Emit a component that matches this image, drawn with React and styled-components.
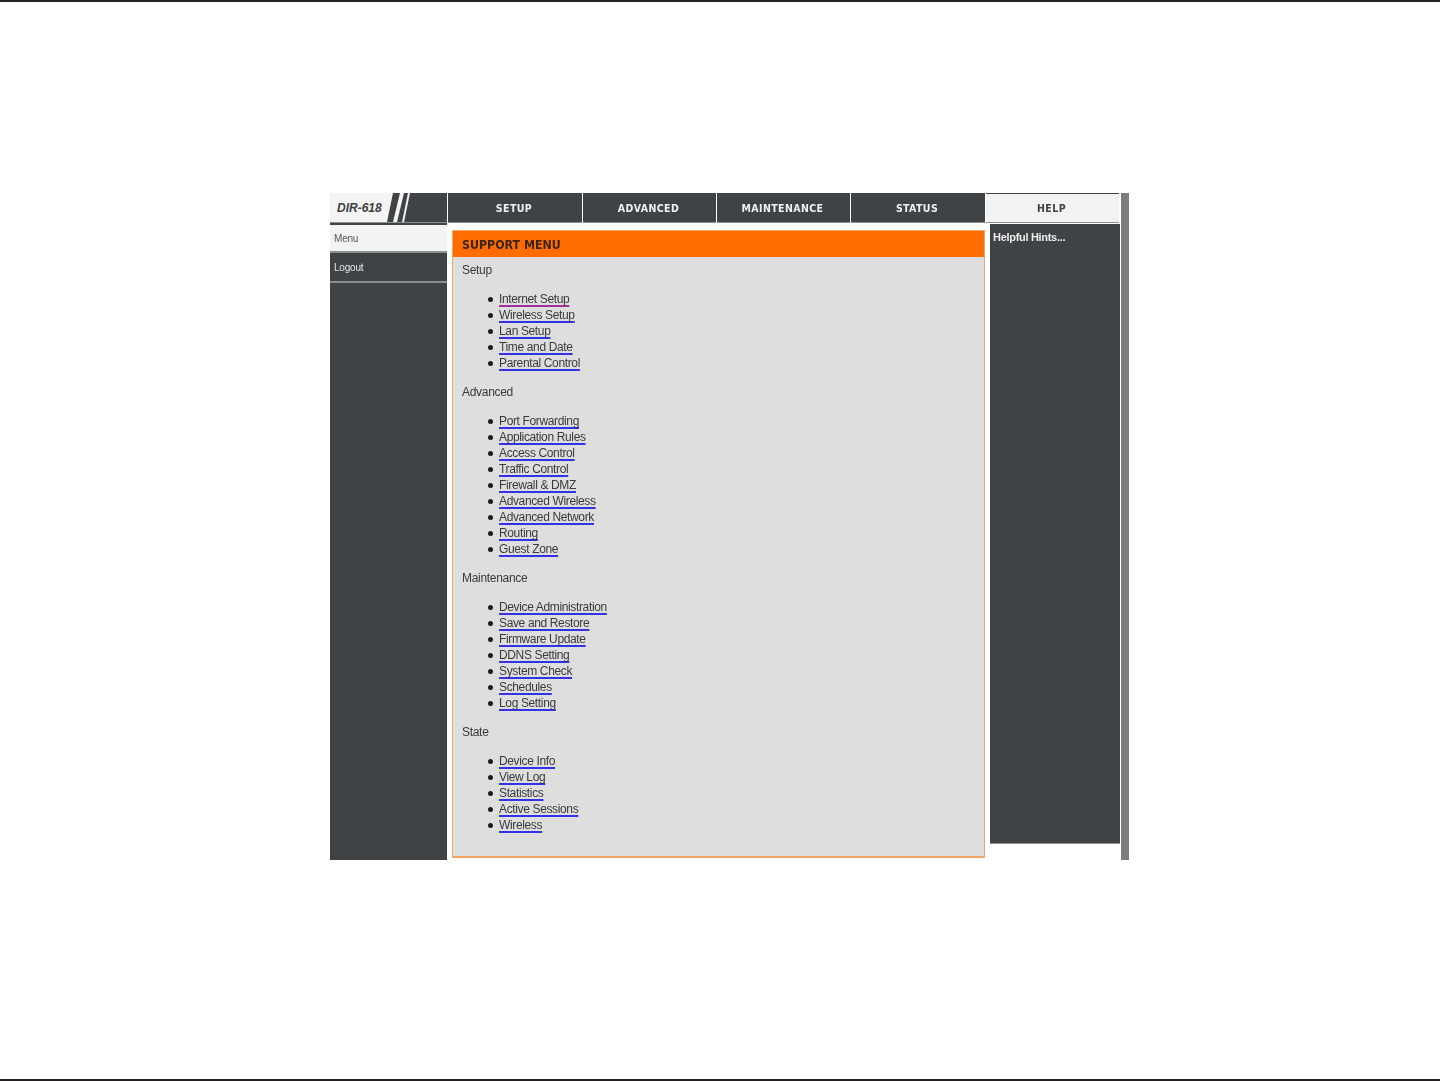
import React from "react";
import styled, { createGlobalStyle } from "styled-components";

const GlobalStyle = createGlobalStyle`
  html, body {
    margin: 0;
    padding: 0;
    background: #fff;
    font-family: "Liberation Sans", Arial, sans-serif;
  }
`;

const Page = styled.div`
  width: 1440px;
  height: 1081px;
  box-sizing: border-box;
  border-top: 2px solid #231f20;
  border-bottom: 2px solid #231f20;
  padding: 191px 311px 0 330px;
`;

const Shot = styled.div`
  width: 799px;
  height: 667px;
  display: grid;
  grid-template-columns: 791px 8px;
  filter: blur(0.6px);
`;

const RightEdge = styled.div`
  background: #7b7d7d;
`;

const Frame = styled.div`
  display: flex;
  flex-direction: column;
  min-width: 0;
`;

const TopBar = styled.div`
  height: 30px;
  display: flex;
`;

const Brand = styled.div`
  width: 117px;
  height: 30px;
  background: #404345;
  display: flex;
  border-bottom: 1px solid #8b8e8e;
  box-sizing: border-box;
  margin-right: 1px;
`;

const BrandName = styled.div`
  width: 56px;
  background: #f4f4f4;
  color: #3d3f41;
  font-size: 12px;
  font-weight: bold;
  font-style: italic;
  line-height: 30px;
  padding-left: 7px;
  box-sizing: border-box;
  white-space: nowrap;
`;

const Tab = styled.div`
  width: ${(p) => p.$width}px;
  height: 30px;
  box-sizing: border-box;
  margin-right: 1px;
  background: ${(p) => (p.$active ? "#f3f3f3" : "#404345")};
  color: ${(p) => (p.$active ? "#404345" : "#f0f0f0")};
  border-bottom: 1px solid #8b8e8e;
  border-top: ${(p) => (p.$active ? "1px solid #404345" : "none")};
  font-family: "DejaVu Sans Condensed", "DejaVu Sans", sans-serif;
  font-size: 10.5px;
  font-weight: bold;
  letter-spacing: 0.4px;
  display: flex;
  align-items: center;
  justify-content: center;
  padding: ${(p) => (p.$active ? 0 : 1)}px 2px 0 0;
`;

const Body = styled.div`
  flex: 1;
  display: flex;
  min-height: 0;
`;

const Sidebar = styled.nav`
  width: 117px;
  flex: none;
  background: #404345;
  padding-top: 2px;
  box-sizing: border-box;
`;

const SideItem = styled.div`
  height: ${(p) => (p.$active ? 28 : 30)}px;
  box-sizing: border-box;
  padding: ${(p) => (p.$active ? 8 : 9)}px 4px 0;
  background: ${(p) => (p.$active ? "#f3f3f3" : "#404345")};
  color: ${(p) => (p.$active ? "#55585a" : "#e4e4e4")};
  border-bottom: 2px solid #8b8e8e;
  font-size: 10px;
  letter-spacing: -0.2px;
`;

const Content = styled.main`
  width: 533px;
  flex: none;
  height: 628px;
  margin: 7px 0 0 5px;
  box-sizing: border-box;
  background: #dedede;
  border: 1px solid #f4a565;
  border-bottom-width: 2px;
`;

const ContentTitle = styled.h1`
  margin: 0;
  height: 26px;
  background: #ff6d00;
  color: #3b2410;
  font-family: "DejaVu Sans Condensed", "DejaVu Sans", sans-serif;
  font-size: 12.3px;
  font-weight: bold;
  line-height: 28px;
  padding-left: 9px;
`;

const MenuBody = styled.div`
  padding: 5px 9px 0;
`;

const SectionTitle = styled.div`
  height: 16px;
  line-height: 16px;
  font-size: 12px;
  letter-spacing: -0.3px;
  color: #3a3a3a;
`;

const LinkList = styled.ul`
  list-style: none;
  margin: 13px 0;
  padding: 0 0 0 26px;
`;

const LinkItem = styled.li`
  height: 16px;
  line-height: 16px;
  font-size: 12px;
  display: flex;
  align-items: center;
  gap: 6px;

  &::before {
    content: "";
    width: 5px;
    height: 5px;
    border-radius: 50%;
    background: #1c1c1c;
  }
`;

const MenuLink = styled.a`
  color: #3a3a3a;
  letter-spacing: -0.36px;
  text-decoration: underline;
  text-decoration-color: ${(p) => (p.$visited ? "#a02f9a" : "#3232e6")};
  text-decoration-thickness: 1.5px;
  text-underline-offset: 2px;
`;

const HelpPanel = styled.aside`
  width: 130px;
  flex: none;
  height: 620px;
  margin: 1px 0 0 5px;
  box-sizing: border-box;
  background: #404345;
  border-bottom: 1px solid #8b8e8e;
  color: #eee;
  font-size: 11px;
  font-weight: bold;
  letter-spacing: -0.3px;
  padding: 7px 3px;
`;

const Sections = [
  {
    title: "Setup",
    links: ["Internet Setup", "Wireless Setup", "Lan Setup", "Time and Date", "Parental Control"],
  },
  {
    title: "Advanced",
    links: [
      "Port Forwarding",
      "Application Rules",
      "Access Control",
      "Traffic Control",
      "Firewall & DMZ",
      "Advanced Wireless",
      "Advanced Network",
      "Routing",
      "Guest Zone",
    ],
  },
  {
    title: "Maintenance",
    links: [
      "Device Administration",
      "Save and Restore",
      "Firmware Update",
      "DDNS Setting",
      "System Check",
      "Schedules",
      "Log Setting",
    ],
  },
  {
    title: "State",
    links: ["Device Info", "View Log", "Statistics", "Active Sessions", "Wireless"],
  },
];

const Slashes = () => (
  <svg width="30" height="29" viewBox="0 0 30 29" aria-hidden="true">
    <polygon points="0,0 7,0 1,29 0,29" fill="#f4f4f4" />
    <polygon points="14,0 18,0 11,29 7,29" fill="#f4f4f4" />
    <polygon points="22,0 24,0 18,29 16,29" fill="#f4f4f4" />
  </svg>
);

const App = () => {
  return (
    <>
      <GlobalStyle />
      <Page>
        <Shot>
          <Frame>
            <TopBar>
              <Brand>
                <BrandName>DIR-618</BrandName>
                <Slashes />
              </Brand>
              <Tab $width={134}>SETUP</Tab>
              <Tab $width={133}>ADVANCED</Tab>
              <Tab $width={133}>MAINTENANCE</Tab>
              <Tab $width={134}>STATUS</Tab>
              <Tab $width={133} $active>HELP</Tab>
            </TopBar>
            <Body>
              <Sidebar>
                <SideItem $active>Menu</SideItem>
                <SideItem>Logout</SideItem>
              </Sidebar>
              <Content>
                <ContentTitle>SUPPORT MENU</ContentTitle>
                <MenuBody>
                  {Sections.map((section) => (
                    <div key={section.title}>
                      <SectionTitle>{section.title}</SectionTitle>
                      <LinkList>
                        {section.links.map((link) => (
                          <LinkItem key={link}>
                            <MenuLink href="#" $visited={link === "Internet Setup"}>{link}</MenuLink>
                          </LinkItem>
                        ))}
                      </LinkList>
                    </div>
                  ))}
                </MenuBody>
              </Content>
              <HelpPanel>Helpful Hints...</HelpPanel>
            </Body>
          </Frame>
          <RightEdge />
        </Shot>
      </Page>
    </>
  );
};

export default App;
